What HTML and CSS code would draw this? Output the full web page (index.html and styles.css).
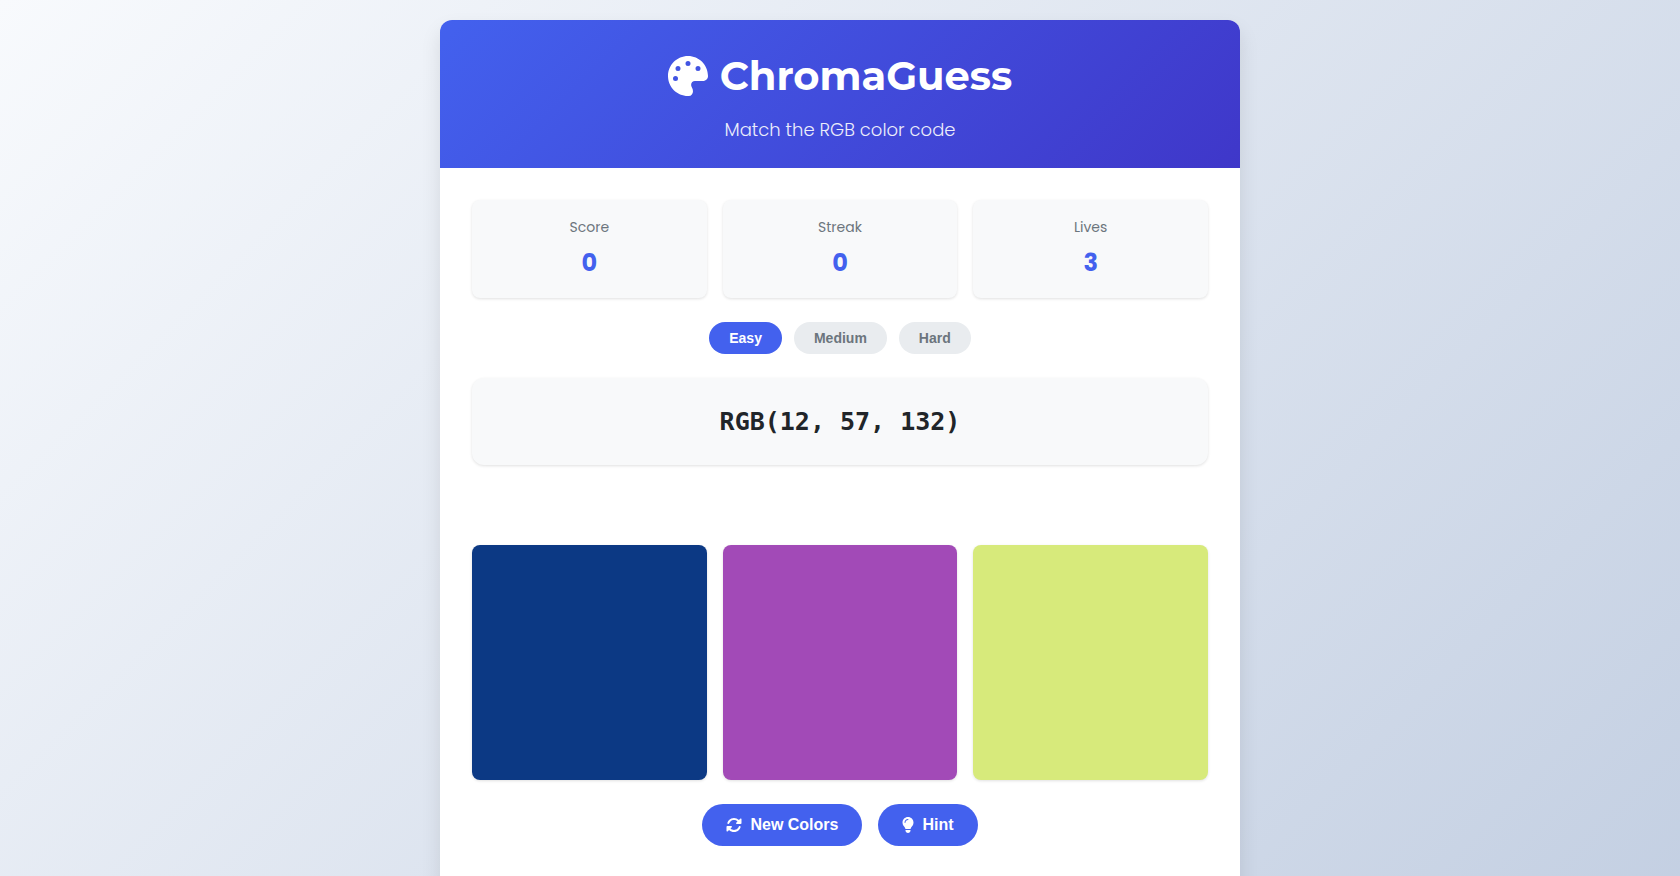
FILE: index.html
```
<!DOCTYPE html>
<html lang="en">
<head>
	<meta charset="UTF-8">
	<meta name="viewport" content="width=device-width, initial-scale=1.0">
	<title>ChromaGuess</title>
	<link rel="stylesheet" href="styles.css">
</head>
<body>
	<div class="container">
		<header class="header">
			<h1>
				<svg class="icon" viewBox="0 0 512 512" aria-hidden="true"><path d="M512 256c0 .9 0 1.8 0 2.7c-.4 36.5-33.6 61.3-70.1 61.3H344c-26.5 0-48 21.5-48 48c0 3.4 .4 6.7 1 9.9c2.1 10.2 6.5 20 10.8 29.9c6.1 13.8 12.1 27.5 12.1 42c0 31.8-21.6 60.7-53.4 62c-3.5 .1-7 .2-10.6 .2C114.6 512 0 397.4 0 256S114.6 0 256 0S512 114.6 512 256zM128 288a32 32 0 1 0 -64 0 32 32 0 1 0 64 0zm0-96a32 32 0 1 0 0-64 32 32 0 1 0 0 64zM288 96a32 32 0 1 0 -64 0 32 32 0 1 0 64 0zm96 96a32 32 0 1 0 0-64 32 32 0 1 0 0 64z"/></svg>
				ChromaGuess
			</h1>
			<p>Match the RGB color code</p>
		</header>

		<main class="game">
			<div class="stats">
				<div class="stat">
					<div class="stat-label">Score</div>
					<div class="stat-value" id="score">0</div>
				</div>
				<div class="stat">
					<div class="stat-label">Streak</div>
					<div class="stat-value" id="streak">0</div>
				</div>
				<div class="stat">
					<div class="stat-label">Lives</div>
					<div class="stat-value" id="lives">3</div>
				</div>
			</div>

			<div class="levels">
				<button type="button" class="level active">Easy</button>
				<button type="button" class="level">Medium</button>
				<button type="button" class="level">Hard</button>
			</div>

			<div class="code" id="code">RGB(12, 57, 132)</div>

			<div class="message" id="message"></div>

			<div class="colors">
				<button type="button" class="color" aria-label="Color 1" style="background-color: rgb(12, 57, 132)"></button>
				<button type="button" class="color" aria-label="Color 2" style="background-color: rgb(162, 74, 183)"></button>
				<button type="button" class="color" aria-label="Color 3" style="background-color: rgb(215, 234, 123)"></button>
			</div>

			<div class="actions">
				<button type="button" class="btn">
					<svg class="icon" viewBox="0 0 512 512" aria-hidden="true"><path d="M142.9 142.9c62.2-62.2 162.7-62.5 225.3-1L327 183c-6.9 6.9-8.9 17.2-5.2 26.2s12.5 14.8 22.2 14.8H463.5c0 0 0 0 0 0H472c13.3 0 24-10.7 24-24V72c0-9.7-5.8-18.5-14.8-22.2s-19.3-1.7-26.2 5.2L413.4 96.6c-87.6-86.5-228.7-86.2-315.8 1C73.2 122 55.6 150.7 44.8 181.4c-5.9 16.7 2.9 34.9 19.5 40.8s34.9-2.9 40.8-19.5c7.7-21.8 20.2-42.3 37.8-59.8zM16 312v7.6 .7V440c0 9.7 5.8 18.5 14.8 22.2s19.3 1.7 26.2-5.2l41.6-41.6c87.6 86.5 228.7 86.2 315.8-1c24.4-24.4 42.1-53.1 52.9-83.7c5.9-16.7-2.9-34.9-19.5-40.8s-34.9 2.9-40.8 19.5c-7.7 21.8-20.2 42.3-37.8 59.8c-62.2 62.2-162.7 62.5-225.3 1L185 329c6.9-6.9 8.9-17.2 5.2-26.2s-12.5-14.8-22.2-14.8H48.4h-.7H40c-13.3 0-24 10.7-24 24z"/></svg>
					New Colors
				</button>
				<button type="button" class="btn">
					<svg class="icon icon-narrow" viewBox="0 0 384 512" aria-hidden="true"><path d="M272 384c9.6-31.9 29.5-59.1 49.2-86.2l0 0c5.2-7.1 10.4-14.2 15.4-21.4c19.8-28.5 31.4-63 31.4-100.3C368 78.8 289.2 0 192 0S16 78.8 16 176c0 37.3 11.6 71.9 31.4 100.3c5 7.2 10.2 14.3 15.4 21.4l0 0c19.8 27.1 39.7 54.4 49.2 86.2H272zM192 512c44.2 0 80-35.8 80-80V416H112v16c0 44.2 35.8 80 80 80zM112 176c0 8.8-7.2 16-16 16s-16-7.2-16-16c0-61.9 50.1-112 112-112c8.8 0 16 7.2 16 16s-7.2 16-16 16c-44.2 0-80 35.8-80 80z"/></svg>
					Hint
				</button>
			</div>
		</main>
	</div>
</body>
</html>
```
FILE: styles.css
```
*{ margin: 0; padding: 0; box-sizing: border-box; }

body{
	min-height: 100vh;
	padding: 20px;
	font-family: Poppins, "Open Sans", sans-serif;
	line-height: 1.6;
	color: #212529;
	background: linear-gradient(135deg, #f8fafd 0%, #c3cfe2 100%) no-repeat;
}

button{ border: none; cursor: pointer; font-family: "Liberation Sans", Arial, sans-serif; font-weight: 600; }
.icon{ width: 1em; height: 1em; fill: currentColor; }

.container{
	max-width: 800px;
	margin: 0 auto;
	background: #fff;
	border-radius: 12px;
	box-shadow: 0 10px 20px rgba(0,0,0,0.1);
	overflow: hidden;
}

/* header */
.header{
	padding: 24px;
	text-align: center;
	color: #fff;
	background: linear-gradient(135deg, #4361ee, #3f37c9);
}
.header h1{
	display: flex;
	justify-content: center;
	align-items: center;
	gap: 12px;
	margin-bottom: 8px;
	font-family: Montserrat, Inter, sans-serif;
	font-size: 40px;
	font-weight: 700;
	line-height: 64px;
}
.header p{ font-size: 18px; font-weight: 300; line-height: 28px; opacity: 0.9; }

.game{ padding: 32px; }

/* score, streak, lives */
.stats{ display: grid; grid-template-columns: repeat(3, 1fr); gap: 16px; margin-bottom: 24px; }
.stat{
	padding: 16px;
	text-align: center;
	background: #f8f9fa;
	border-radius: 8px;
	box-shadow: 0 1px 3px rgba(0,0,0,0.12);
}
.stat-label{ margin-bottom: 5px; font-size: 14px; line-height: 23px; color: #6c757d; }
.stat-value{ font-size: 24px; font-weight: 700; line-height: 38px; color: #4361ee; }

/* difficulty */
.levels{ display: flex; justify-content: center; gap: 12px; margin-bottom: 24px; }
.level{
	padding: 8px 20px;
	font-size: 14px;
	line-height: 16px;
	color: #6c757d;
	background: #e9ecef;
	border-radius: 20px;
}
.level.active{ color: #fff; background: #4361ee; }

.code{
	padding: 24px;
	margin-bottom: 24px;
	text-align: center;
	font-family: "DejaVu Sans Mono", monospace;
	font-size: 25px;
	font-weight: 700;
	line-height: 39px;
	background: #f8f9fa;
	border-radius: 12px;
	box-shadow: 0 1px 3px rgba(0,0,0,0.12);
}
.message{ min-height: 32px; margin-bottom: 24px; text-align: center; }

/* swatches */
.colors{ display: grid; grid-template-columns: repeat(3, 1fr); gap: 16px; margin-bottom: 24px; }
.color{ aspect-ratio: 1; border-radius: 8px; box-shadow: 0 1px 3px rgba(0,0,0,0.12); }

.actions{ display: flex; justify-content: center; gap: 16px; margin-bottom: 24px; }
.btn{
	display: flex;
	align-items: center;
	gap: 8px;
	padding: 12px 24px;
	font-size: 16px;
	line-height: 18px;
	color: #fff;
	background: #4361ee;
	border-radius: 50px;
}
.btn .icon-narrow{ width: 12px; }
```
